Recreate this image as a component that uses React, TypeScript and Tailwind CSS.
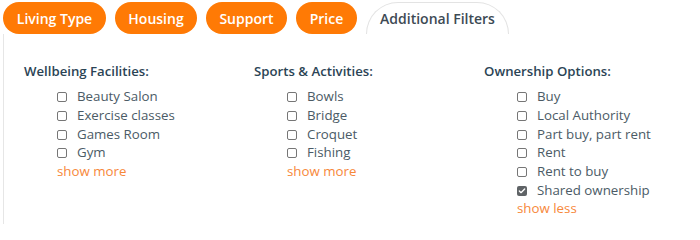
import { Check } from "lucide-react";

const TABS = [
  { label: "Living Type", w: "w-[103px]" },
  { label: "Housing", w: "w-[82px]" },
  { label: "Support", w: "w-[81px]" },
  { label: "Price", w: "w-[61px]" },
];

type Group = { title: string; items: string[]; checked?: string[]; link: string };

const GROUPS: Group[] = [
  {
    title: "Wellbeing Facilities:",
    items: ["Beauty Salon", "Exercise classes", "Games Room", "Gym"],
    link: "show more",
  },
  {
    title: "Sports & Activities:",
    items: ["Bowls", "Bridge", "Croquet", "Fishing"],
    link: "show more",
  },
  {
    title: "Ownership Options:",
    items: ["Buy", "Local Authority", "Part buy, part rent", "Rent", "Rent to buy", "Shared ownership"],
    checked: ["Shared ownership"],
    link: "show less",
  },
];

const Box = ({ on }: { on?: boolean }) =>
  on ? (
    <span className="flex h-[10px] w-[10px] shrink-0 items-center justify-center rounded-[2px] bg-[#5f6366]">
      <Check className="h-[8px] w-[8px] text-white" strokeWidth={4} />
    </span>
  ) : (
    <span className="h-[10px] w-[10px] shrink-0 rounded-[2px] border border-[#767676] bg-white" />
  );

const App = () => {
  return (
    <div className="h-[224px] w-[700px] overflow-hidden bg-white font-['Open_Sans',sans-serif]">
      <div className="flex gap-[9px] pl-[3px] pt-[2px]">
        {TABS.map((t) => (
          <button
            key={t.label}
            className={`${t.w} h-[32px] shrink-0 rounded-full bg-[#ff7a05] text-[14px] font-semibold text-white`}
          >
            {t.label}
          </button>
        ))}
        <button className="h-[32px] w-[143px] shrink-0 rounded-t-full rounded-b-none border border-b-0 border-[#e3e3e3] bg-white text-[14px] font-semibold text-[#3d4a54]">
          Additional Filters
        </button>
      </div>
      <div className="ml-[3px] flex h-[200px] border-l border-[#e6e6e6] pl-[20px] pt-[28px]">
        {GROUPS.map((g) => (
          <div key={g.title} className="w-[230px] shrink-0">
            <h3 className="text-[13.2px] font-semibold leading-[18px] text-[#2b4455]">{g.title}</h3>
            <ul className="mt-[8px] pl-[33px]">
              {g.items.map((it) => (
                <li key={it} className="flex h-[18.67px] items-center gap-[10px] text-[13.3px] text-[#4b5b66]">
                  <Box on={g.checked?.includes(it)} />
                  <span>{it}</span>
                </li>
              ))}
              <li className="flex h-[18.67px] items-center text-[13.3px] text-[#f7883a]">{g.link}</li>
            </ul>
          </div>
        ))}
      </div>
    </div>
  );
};

export default App;
